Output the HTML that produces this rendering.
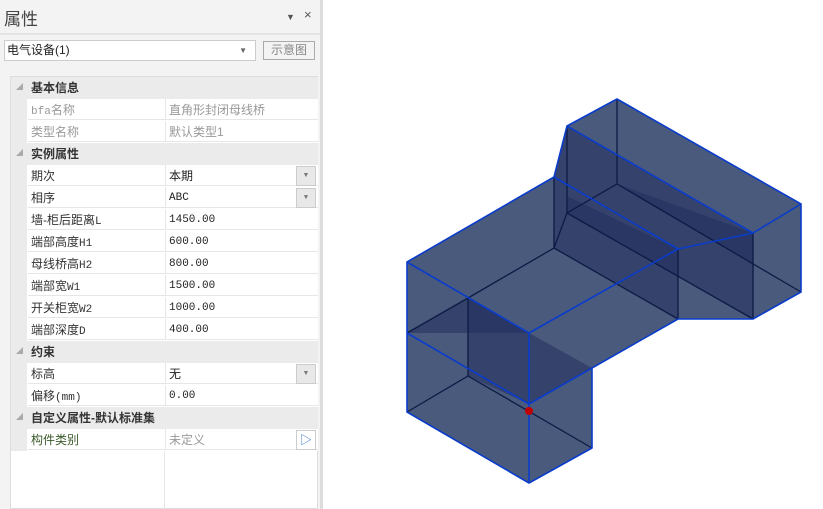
<!DOCTYPE html>
<html><head><meta charset="utf-8"><style>
*{margin:0;padding:0;box-sizing:border-box}
body{width:823px;height:509px;overflow:hidden;background:#fff;font-family:"Liberation Sans","Noto Sans CJK SC",sans-serif;position:relative}
#panel{position:absolute;left:0;top:0;width:320px;height:509px;background:#f3f3f3}
#sep{position:absolute;left:320px;top:0;width:3px;height:509px;background:#dcdcdc}
.t{position:absolute;left:4px;top:5px;font-size:17px;color:#444}
.ctl{position:absolute;top:9px;font-size:12px;color:#555}
#hl{position:absolute;left:0;top:33px;width:320px;height:2px;background:#e4e4e4}
#dd{position:absolute;left:4px;top:40px;width:252px;height:21px;background:#fff;border:1px solid #ccc;font-size:12px;line-height:19px;padding-left:2px;color:#222}
#dd .a{position:absolute;right:8px;top:0;font-size:8px;color:#666}
#btn{position:absolute;left:263px;top:41px;width:52px;height:19px;border:1px solid #aaa;font-size:12px;line-height:17px;text-align:center;color:#888;background:#f3f3f3}
#grid{position:absolute;left:10px;top:76px;width:308px;height:433px;background:#fff;border:1px solid #ddd}
.r{position:absolute;left:0;width:307px;height:22px;font-size:12px;line-height:22px}
.h{background:#ebebeb;font-weight:bold;color:#333}
.h span{position:absolute;left:20px}
.h i{position:absolute;left:5px;top:0;font-style:normal;font-size:7px;color:#aaa}
.d{background:#fff}
.d .g{position:absolute;left:0;top:0;width:16px;height:22px;background:#ebebeb}
.d .n{position:absolute;left:17px;top:0;width:137px;height:21px;padding-left:3px;color:#333;border-bottom:1px solid #e6e6e6}
.d .v{position:absolute;left:154px;top:0;width:153px;height:21px;padding-left:3px;color:#222;border-bottom:1px solid #e6e6e6;border-left:1px solid #e6e6e6}
.m{font-family:"Liberation Mono",monospace;font-size:11px}
.gr{color:#999!important}
.b{position:absolute;right:2px;top:1px;width:20px;height:20px;background:#e8e8e8;border:1px solid #ccc;font-size:7px;text-align:center;line-height:18px;color:#777}
#vl{position:absolute;left:164px;top:451px;width:1px;height:58px;background:#e6e6e6}
</style></head><body>
<div id="panel">
<div class="t">属性</div>
<div class="ctl" style="left:286px;font-size:9px;top:12px">▼</div>
<div class="ctl" style="left:304px;font-size:13px;top:7px">×</div>
<div id="hl"></div>
<div id="dd">电气设备(1)<span class="a">▼</span></div>
<div id="btn">示意图</div>
<div id="grid">
<div class="r h" style="top:0"><i>◢</i><span>基本信息</span></div>
<div class="r d" style="top:22px"><div class="g"></div><div class="n gr"><span class="m">bfa</span>名称</div><div class="v gr">直角形封闭母线桥</div></div>
<div class="r d" style="top:44px"><div class="g"></div><div class="n gr">类型名称</div><div class="v gr">默认类型1</div></div>
<div class="r h" style="top:66px"><i>◢</i><span>实例属性</span></div>
<div class="r d" style="top:88px"><div class="g"></div><div class="n">期次</div><div class="v">本期<div class="b">▼</div></div></div>
<div class="r d" style="top:110px"><div class="g"></div><div class="n">相序</div><div class="v m">ABC<div class="b">▼</div></div></div>
<div class="r d" style="top:132px"><div class="g"></div><div class="n">墙-柜后距离<span class="m">L</span></div><div class="v m">1450.00</div></div>
<div class="r d" style="top:154px"><div class="g"></div><div class="n">端部高度<span class="m">H1</span></div><div class="v m">600.00</div></div>
<div class="r d" style="top:176px"><div class="g"></div><div class="n">母线桥高<span class="m">H2</span></div><div class="v m">800.00</div></div>
<div class="r d" style="top:198px"><div class="g"></div><div class="n">端部宽<span class="m">W1</span></div><div class="v m">1500.00</div></div>
<div class="r d" style="top:220px"><div class="g"></div><div class="n">开关柜宽<span class="m">W2</span></div><div class="v m">1000.00</div></div>
<div class="r d" style="top:242px"><div class="g"></div><div class="n">端部深度<span class="m">D</span></div><div class="v m">400.00</div></div>
<div class="r h" style="top:264px"><i>◢</i><span>约束</span></div>
<div class="r d" style="top:286px"><div class="g"></div><div class="n">标高</div><div class="v">无<div class="b">▼</div></div></div>
<div class="r d" style="top:308px"><div class="g"></div><div class="n">偏移<span class="m">(mm)</span></div><div class="v m">0.00</div></div>
<div class="r h" style="top:330px"><i>◢</i><span>自定义属性-默认标准集</span></div>
<div class="r d" style="top:352px"><div class="g"></div><div class="n" style="color:#3a5a2a">构件类别</div><div class="v gr">未定义<div class="b" style="background:#fff;font-size:12px;color:#3070c0;line-height:18px">▷</div></div></div>
</div>
<div id="vl"></div>
</div>
<div id="sep"></div>
<svg style="position:absolute;left:0;top:0" width="823" height="509">
<polygon points="407,262 554,177 567,126 617,99 801,204 801,292 753,319 678,319 592,368 592,448 529,483 407,412" fill="#4a5a7c"/>
<g fill="#22305e" fill-opacity="0.55">
<polygon points="567,126 753,233 678,249 554,177"/>
<polygon points="554,177 678,249 678,319 554,248"/>
<polygon points="678,249 753,233 753,319 678,276"/>
<polygon points="617,184 753,264 753,233"/>
<polygon points="567,196 678,249 678,276 567,213"/>
<polygon points="407,333 468,298 529,333"/>
<polygon points="468,298 529,333 529,404 468,376"/>
<polygon points="529,333 592,368 529,404"/>
</g>
<g stroke="#0c1a45" stroke-width="1.3" fill="none">
<polyline points="407,333 468,298 554,248 567,213 617,184 801,292"/>
<line x1="567" y1="213" x2="753" y2="319"/>
<polyline points="554,248 678,319"/>
<line x1="468" y1="298" x2="468" y2="376"/>
<polyline points="407,412 468,376 592,448"/>
<line x1="554" y1="177" x2="554" y2="248"/>
<line x1="567" y1="126" x2="567" y2="213"/>
<line x1="617" y1="99" x2="617" y2="184"/>
<line x1="678" y1="249" x2="678" y2="319"/>
<line x1="753" y1="233" x2="753" y2="319"/>
</g>
<g stroke="#0a3ccc" stroke-width="1.6" fill="none" stroke-linejoin="round">
<polygon points="407,262 554,177 567,126 617,99 801,204 801,292 753,319 678,319 592,368 592,448 529,483 407,412"/>
<polyline points="407,262 529,333 529,483"/>
<polyline points="529,333 678,249 753,233 801,204"/>
<line x1="567" y1="126" x2="753" y2="233"/>
<line x1="554" y1="177" x2="678" y2="249"/>
<polyline points="407,333 529,404 592,368"/>
</g>
<circle cx="529" cy="411" r="4" fill="#c00000"/>
</svg>
</body></html>
